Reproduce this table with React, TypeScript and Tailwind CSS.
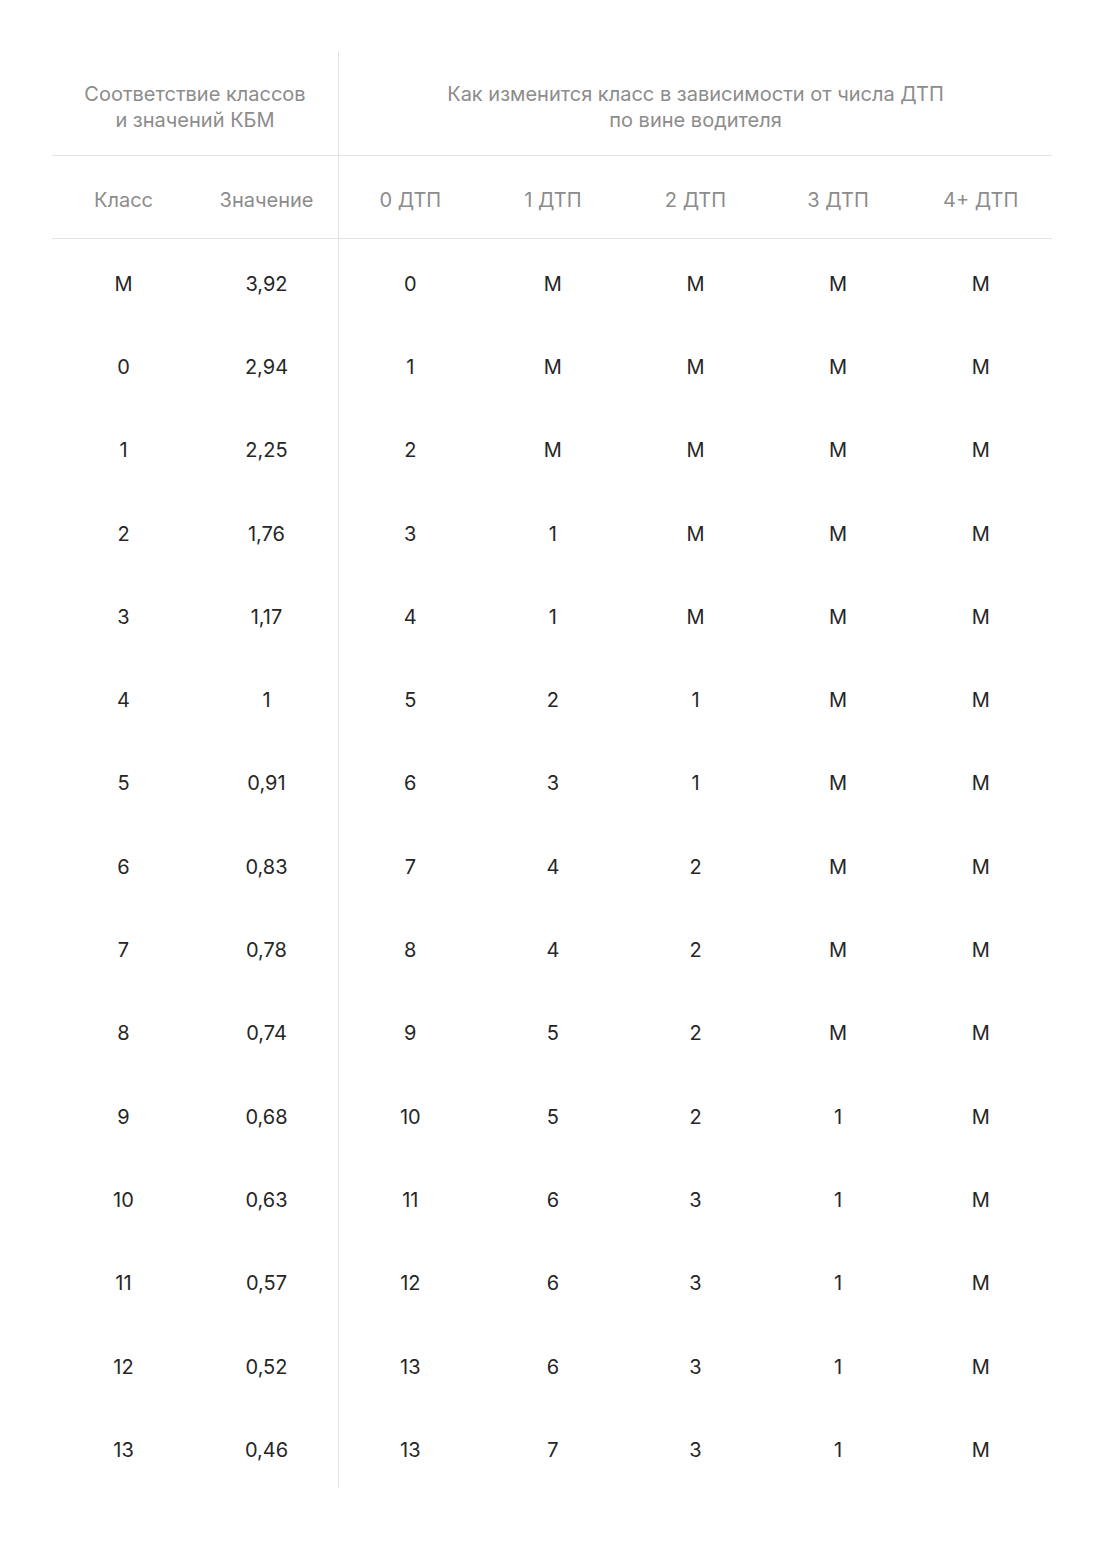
const rows: string[][] = [
  ["M", "3,92", "0", "M", "M", "M", "M"],
  ["0", "2,94", "1", "M", "M", "M", "M"],
  ["1", "2,25", "2", "M", "M", "M", "M"],
  ["2", "1,76", "3", "1", "M", "M", "M"],
  ["3", "1,17", "4", "1", "M", "M", "M"],
  ["4", "1", "5", "2", "1", "M", "M"],
  ["5", "0,91", "6", "3", "1", "M", "M"],
  ["6", "0,83", "7", "4", "2", "M", "M"],
  ["7", "0,78", "8", "4", "2", "M", "M"],
  ["8", "0,74", "9", "5", "2", "M", "M"],
  ["9", "0,68", "10", "5", "2", "1", "M"],
  ["10", "0,63", "11", "6", "3", "1", "M"],
  ["11", "0,57", "12", "6", "3", "1", "M"],
  ["12", "0,52", "13", "6", "3", "1", "M"],
  ["13", "0,46", "13", "7", "3", "1", "M"],
];

const dtp = ["0 ДТП", "1 ДТП", "2 ДТП", "3 ДТП", "4+ ДТП"];

export default function App() {
  return (
    <main
      className="w-full min-h-[1541px] bg-white px-[52px] pt-[52px]"
      style={{ fontFamily: "Inter, 'Noto Sans', sans-serif" }}
    >
      <div className="flex w-[1000px]">
        {/* left: classes and values */}
        <div className="w-[286px]">
          <div className="h-[104px] pt-[6px] flex items-center justify-center border-b border-[#e3e3e3] text-center text-[20px] leading-[26px] text-[#8c8c8c]">
            Соответствие классов
            <br />
            и значений КБМ
          </div>
          <div className="h-[83px] pt-[6px] grid grid-cols-2 border-b border-[#e3e3e3] text-[20px] text-[#8c8c8c]">
            <div className="flex items-center justify-center">Класс</div>
            <div className="flex items-center justify-center">Значение</div>
          </div>
          {rows.map((r, i) => (
            <div key={i} className="h-[83.3px] pt-[6px] grid grid-cols-2 text-[20px] text-[#262626]">
              <div className="flex items-center justify-center">{r[0]}</div>
              <div className="flex items-center justify-center">{r[1]}</div>
            </div>
          ))}
        </div>

        {/* right: how class changes */}
        <div className="flex-1 border-l border-[#e3e3e3]">
          <div className="h-[104px] pt-[6px] flex items-center justify-center border-b border-[#e3e3e3] text-center text-[20px] leading-[26px] text-[#8c8c8c]">
            Как изменится класс в зависимости от числа ДТП
            <br />
            по вине водителя
          </div>
          <div className="h-[83px] pt-[6px] grid grid-cols-5 border-b border-[#e3e3e3] text-[20px] text-[#8c8c8c]">
            {dtp.map((d) => (
              <div key={d} className="flex items-center justify-center">
                {d}
              </div>
            ))}
          </div>
          {rows.map((r, i) => (
            <div key={i} className="h-[83.3px] pt-[6px] grid grid-cols-5 text-[20px] text-[#262626]">
              {r.slice(2).map((c, j) => (
                <div key={j} className="flex items-center justify-center">
                  {c}
                </div>
              ))}
            </div>
          ))}
        </div>
      </div>
    </main>
  );
}
